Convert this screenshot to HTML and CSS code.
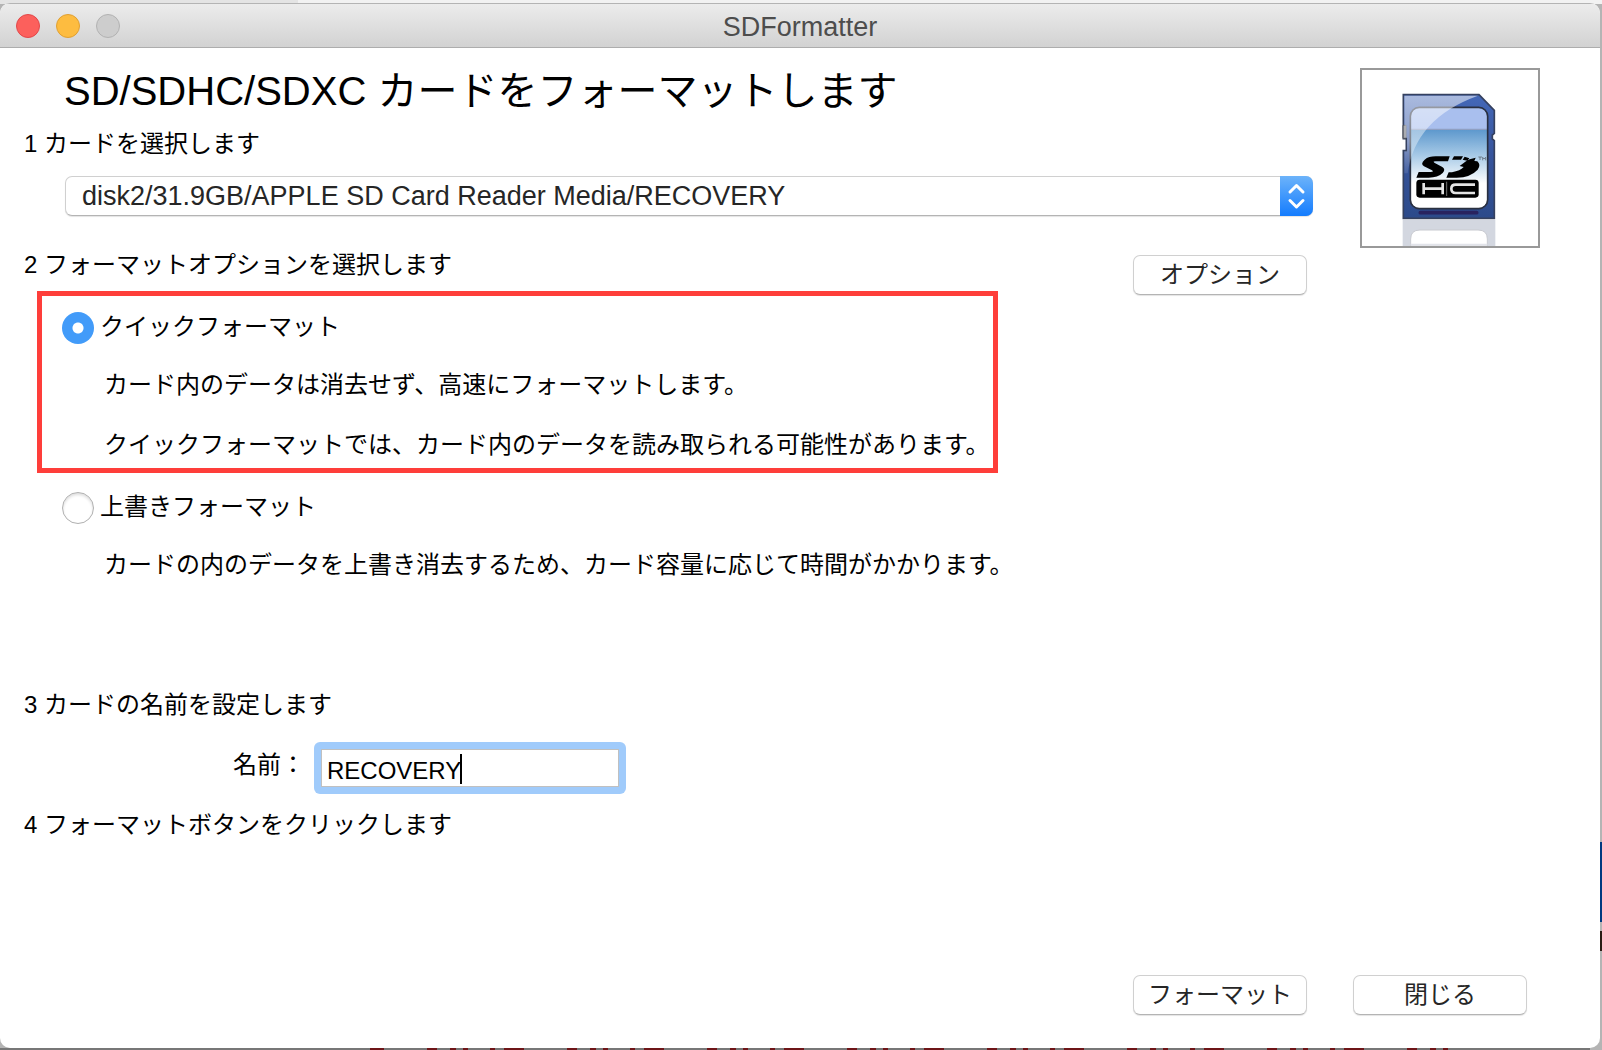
FILE: index.html
```html
<!DOCTYPE html>
<html lang="ja">
<head>
<meta charset="utf-8">
<meta name="viewport" content="width=device-width, initial-scale=1">
<title>SDFormatter</title>
<link rel="stylesheet" href="styles.css">
</head>
<body>
<main class="window">
  <header class="titlebar">
    <div class="lights">
      <button class="light light-close" type="button" aria-label="閉じる"></button>
      <button class="light light-minimize" type="button" aria-label="しまう"></button>
      <button class="light light-zoom" type="button" aria-label="拡大" disabled></button>
    </div>
    <div class="window-title">SDFormatter</div>
  </header>

  <form class="content">
    <div class="top">
      <div class="card-select">
        <h1 class="heading">SD/SDHC/SDXC カードをフォーマットします</h1>
        <label class="step" for="card">1 カードを選択します</label>
        <div class="popup">
          <select class="popup-select" id="card">
            <option>disk2/31.9GB/APPLE SD Card Reader Media/RECOVERY</option>
          </select>
          <svg class="popup-arrows" viewBox="0 0 33 40" aria-hidden="true">
            <path d="M10 16 L16.500 9.500 L23 16 M10 24.500 L16.500 31 L23 24.500"/>
          </svg>
        </div>
      </div>
      <div class="card-picture">
        <svg class="card-svg" viewBox="66 60 528 528" role="img" aria-label="SDHC カード">
          <defs>
            <linearGradient id="shell" x1="0" y1="0" x2="0" y2="1">
              <stop offset="0" stop-color="#4468b8"/>
              <stop offset=".5" stop-color="#36549c"/>
              <stop offset="1" stop-color="#2c4a8a"/>
            </linearGradient>
            <linearGradient id="sky" x1="0" y1="236" x2="0" y2="400" gradientUnits="userSpaceOnUse">
              <stop offset="0" stop-color="#5a96cc"/>
              <stop offset=".5" stop-color="#a9cbe7"/>
              <stop offset="1" stop-color="#fff"/>
            </linearGradient>
            <linearGradient id="gloss" x1="0" y1="133" x2="0" y2="370" gradientUnits="userSpaceOnUse">
              <stop offset="0" stop-color="#fff" stop-opacity=".55"/>
              <stop offset=".6" stop-color="#fff" stop-opacity=".4"/>
              <stop offset="1" stop-color="#fff" stop-opacity=".1"/>
            </linearGradient>
            <clipPath id="label"><rect x="212" y="173" width="230" height="302" rx="27"/></clipPath>
          </defs>
          <path d="M188 510H466V588H188Z" fill="#d3d7e0"/>
          <path d="M212 588V567Q212 540 240 540H414Q442 540 442 567V588Z" fill="#fff" stroke="#c8cad0" stroke-width="3"/>
          <path d="M212 584H442" stroke="#e2e4ea" stroke-width="5"/>
          <path d="M190 134H417L463 181V250L457 255V267L463 272V505H190V302H199V266H190Z" fill="url(#shell)" stroke="#35415f" stroke-width="5"/>
          <path d="M189 226H198V265H189Z" fill="#888b92" stroke="#50545c" stroke-width="3"/>
          <g clip-path="url(#label)">
            <path d="M210 170H445V480H210Z" fill="url(#sky)"/>
            <path d="M210 170H445V237H210Z" fill="#a9bfee"/>
            <path d="M210 238H445" stroke="#8f9fc2" stroke-width="4"/>
          </g>
          <rect x="211" y="172" width="232" height="304" rx="27" fill="none" stroke="#2a3040" stroke-width="5"/>
          <path d="M193 137H414Q225 205 203 370L193 370V304H201V263H193Z" fill="url(#gloss)"/>
          <path d="M241 488H410" stroke="#29235f" stroke-width="11" stroke-linecap="round"/>
          <path d="M329 319L324 334H286Q278 334 283 338L307 351Q318 359 308 369Q294 383 266 383H229L236 366H272Q283 366 276 361L252 349Q240 341 254 329Q266 319 287 319Z"/>
          <path d="M342 319H369L363 329H336ZM374 320L388 325L382 332L368 329ZM389 328L407 323L403 333L412 334Q424 345 413 359Q392 382 350 383H319L326 367H336Q361 362 371 351L359 348L378 334Z"/>
          <path d="M415 321H426M420 321V330M428 331V322L432 327L437 322V331" fill="none" stroke="#505860" stroke-width="2"/>
          <rect x="229" y="389" width="187" height="54" rx="10"/>
          <path d="M251 399V433M308 399V433M251 416H308M405 404H347Q334 404 334 416T347 429H405" fill="none" stroke="#e4e4e4" stroke-width="8"/>
          <path d="M320 395V438" stroke="#aaa" stroke-width="2"/>
        </svg>
      </div>
    </div>

    <div class="format-row">
      <fieldset class="format-options">
        <legend class="step">2 フォーマットオプションを選択します</legend>
        <div class="option option-marked">
          <div class="option-choice">
            <input class="radio" type="radio" name="format" id="quick" checked>
            <label class="option-label" for="quick">クイックフォーマット</label>
          </div>
          <p class="option-text">カード内のデータは消去せず、高速にフォーマットします。</p>
          <p class="option-text">クイックフォーマットでは、カード内のデータを読み取られる可能性があります。</p>
        </div>
        <div class="option">
          <div class="option-choice">
            <input class="radio" type="radio" name="format" id="overwrite">
            <label class="option-label" for="overwrite">上書きフォーマット</label>
          </div>
          <p class="option-text">カードの内のデータを上書き消去するため、カード容量に応じて時間がかかります。</p>
        </div>
      </fieldset>
      <button class="push" type="button">オプション</button>
    </div>

    <h2 class="step step-name">3 カードの名前を設定します</h2>
    <div class="name-row">
      <label class="name-label" for="name">名前：</label>
      <div class="focus-ring">
        <input class="name-input" id="name" type="text" value="RECOVERY">
        <span class="caret"></span>
      </div>
    </div>
    <h2 class="step">4 フォーマットボタンをクリックします</h2>

    <footer class="actions">
      <button class="push" type="button">フォーマット</button>
      <button class="push" type="button">閉じる</button>
    </footer>
  </form>
</main>
</body>
</html>
```
FILE: styles.css
```css
* {
  box-sizing: border-box;
}

/* The desktop behind the window shows as a thin edge on three sides. */
body {
  margin: 0;
  padding: 3px 2px 2px 0;
  min-height: 100vh;
  display: flex;
  background:
    linear-gradient(#003a80, #003a80) right 0 top 842px / 2px 80px no-repeat,
    linear-gradient(#2a1c14, #2a1c14) right 0 top 931px / 2px 20px no-repeat,
    linear-gradient(#777, #777) left 0 bottom 0 / 370px 2px no-repeat,
    linear-gradient(#777, #777) right 12px bottom 0 / 138px 2px no-repeat,
    repeating-linear-gradient(90deg, #777 0 7px, #6e1518 7px 17px, #777 17px 30px, #6e1518 30px 36px, #777 36px 43px, #6e1518 43px 48px, #777 48px 70px, #6e1518 70px 75px, #777 75px 84px, #6e1518 84px 104px, #777 104px 140px) left 0 bottom 0 / 1590px 2px no-repeat,
    linear-gradient(90deg, #e4e4e4 298px, #f2f2f2 298px) left 0 top 0 / 100% 4px no-repeat,
    #b4b4b4;
  color: #000;
  font: 24px/32px "Liberation Sans", "Noto Sans CJK JP", sans-serif;
}

.window {
  flex: 1;
  display: flex;
  flex-direction: column;
  border-radius: 10px;
  background: #fff;
  overflow: hidden;
}

.titlebar {
  display: grid;
  grid-template-columns: 1fr auto 1fr;
  align-items: center;
  height: 45px;
  padding: 0 16px;
  border-top: 1px solid #b4b4b4;
  border-bottom: 1px solid #adadad;
  background: linear-gradient(#ececec, #d2d2d2);
}

.lights {
  display: flex;
  gap: 16px;
}

.light {
  width: 24px;
  height: 24px;
  padding: 0;
  border: 1px solid;
  border-radius: 50%;
}

.light-close {
  border-color: #e2484a;
  background: #fc605c;
}

.light-minimize {
  border-color: #e0a033;
  background: #fdbc40;
}

.light-zoom {
  border-color: #b2b2b2;
  background: #cdcdcd;
}

.window-title {
  padding-top: 2px;
  color: #4d4d4d;
  font-size: 27px;
}

.content {
  flex: 1;
  display: flex;
  flex-direction: column;
  padding: 20px 0 33px 24px;
}

.top {
  display: flex;
  gap: 47px;
  padding-right: 60px;
}

.card-select {
  flex: 1;
  display: flex;
  flex-direction: column;
}

.heading {
  margin: 0 0 14px 40px;
  font-size: 40px;
  font-weight: 400;
  line-height: 46px;
}

.step {
  margin: 0;
  padding: 0;
  font-size: 24px;
  font-weight: 400;
}

.popup {
  position: relative;
  margin: 16px 0 0 41px;
}

.popup-select {
  appearance: none;
  display: block;
  width: 100%;
  height: 40px;
  padding: 0 40px 0 16px;
  border: 1px solid #d0d0d0;
  border-bottom-color: #b4b4b4;
  border-radius: 7px;
  background: #fff;
  box-shadow: 0 1px 1px #e4e4e4;
  color: #262626;
  font: 27px "Liberation Sans", "Noto Sans CJK JP", sans-serif;
}

.popup-arrows {
  position: absolute;
  top: 0;
  right: 0;
  width: 33px;
  height: 40px;
  border-radius: 0 7px 7px 0;
  background: linear-gradient(#6cb3fa, #147cfe);
  fill: none;
  stroke: #fff;
  stroke-width: 3;
  stroke-linecap: round;
  stroke-linejoin: round;
  pointer-events: none;
}

.card-picture {
  width: 180px;
  height: 180px;
  border: 2px solid #999;
}

.card-svg {
  display: block;
  width: 100%;
  height: 100%;
}

.format-row {
  display: flex;
  justify-content: space-between;
  align-items: flex-start;
  margin-top: 1px;
  padding-right: 293px;
}

.format-row > .push {
  margin-top: 6px;
}

.format-options {
  margin: 0;
  padding: 0;
  border: 0;
  white-space: nowrap;
}

.option {
  width: fit-content;
  margin-left: 13px;
  padding: 19px 0 0 25px;
}

.option-marked {
  margin-top: 10px;
  padding: 16px 3px 7px 20px;
  border: 5px solid #fe3e3a;
}

.option-choice {
  display: flex;
  align-items: center;
  gap: 6px;
  height: 32px;
}

.option-label {
  padding-bottom: 2px;
}

.option-text {
  margin: 25px 0 0 42px;
}

.option-text + .option-text {
  margin-top: 28px;
}

.radio {
  appearance: none;
  width: 32px;
  height: 32px;
  margin: 0;
  border: 1px solid #b0b0b0;
  border-radius: 50%;
  background: #fff;
  box-shadow: inset 0 2px 3px #ddd;
}

.radio:checked {
  border: 0;
  background: radial-gradient(circle, #fff 5px, #429bf9 6px);
  box-shadow: none;
}

.step-name {
  margin-top: 108px;
}

.name-row {
  display: flex;
  align-items: flex-start;
  gap: 9px;
  margin: 21px 0 15px 209px;
}

.name-label {
  padding-top: 7px;
}

.focus-ring {
  position: relative;
  padding: 7px;
  border-radius: 6px;
  background: #a0cbfb;
}

.name-input {
  display: block;
  width: 298px;
  height: 38px;
  padding: 6px 5px 0;
  border: 1px solid #c0c0c0;
  border-radius: 0;
  outline: 0;
  background: #fff;
  color: #000;
  font: 24px "Liberation Sans", "Noto Sans CJK JP", sans-serif;
}

.caret {
  position: absolute;
  top: 12px;
  left: 146px;
  width: 2px;
  height: 30px;
  background: #000;
}

.actions {
  display: flex;
  justify-content: flex-end;
  gap: 46px;
  margin-top: auto;
  padding-right: 73px;
}

.push {
  width: 174px;
  height: 40px;
  padding: 0;
  border: 1px solid #d0d0d0;
  border-bottom-color: #b4b4b4;
  border-radius: 7px;
  background: #fff;
  box-shadow: 0 1px 1px #e4e4e4;
  color: #262626;
  font: 24px/32px "Liberation Sans", "Noto Sans CJK JP", sans-serif;
}
```
